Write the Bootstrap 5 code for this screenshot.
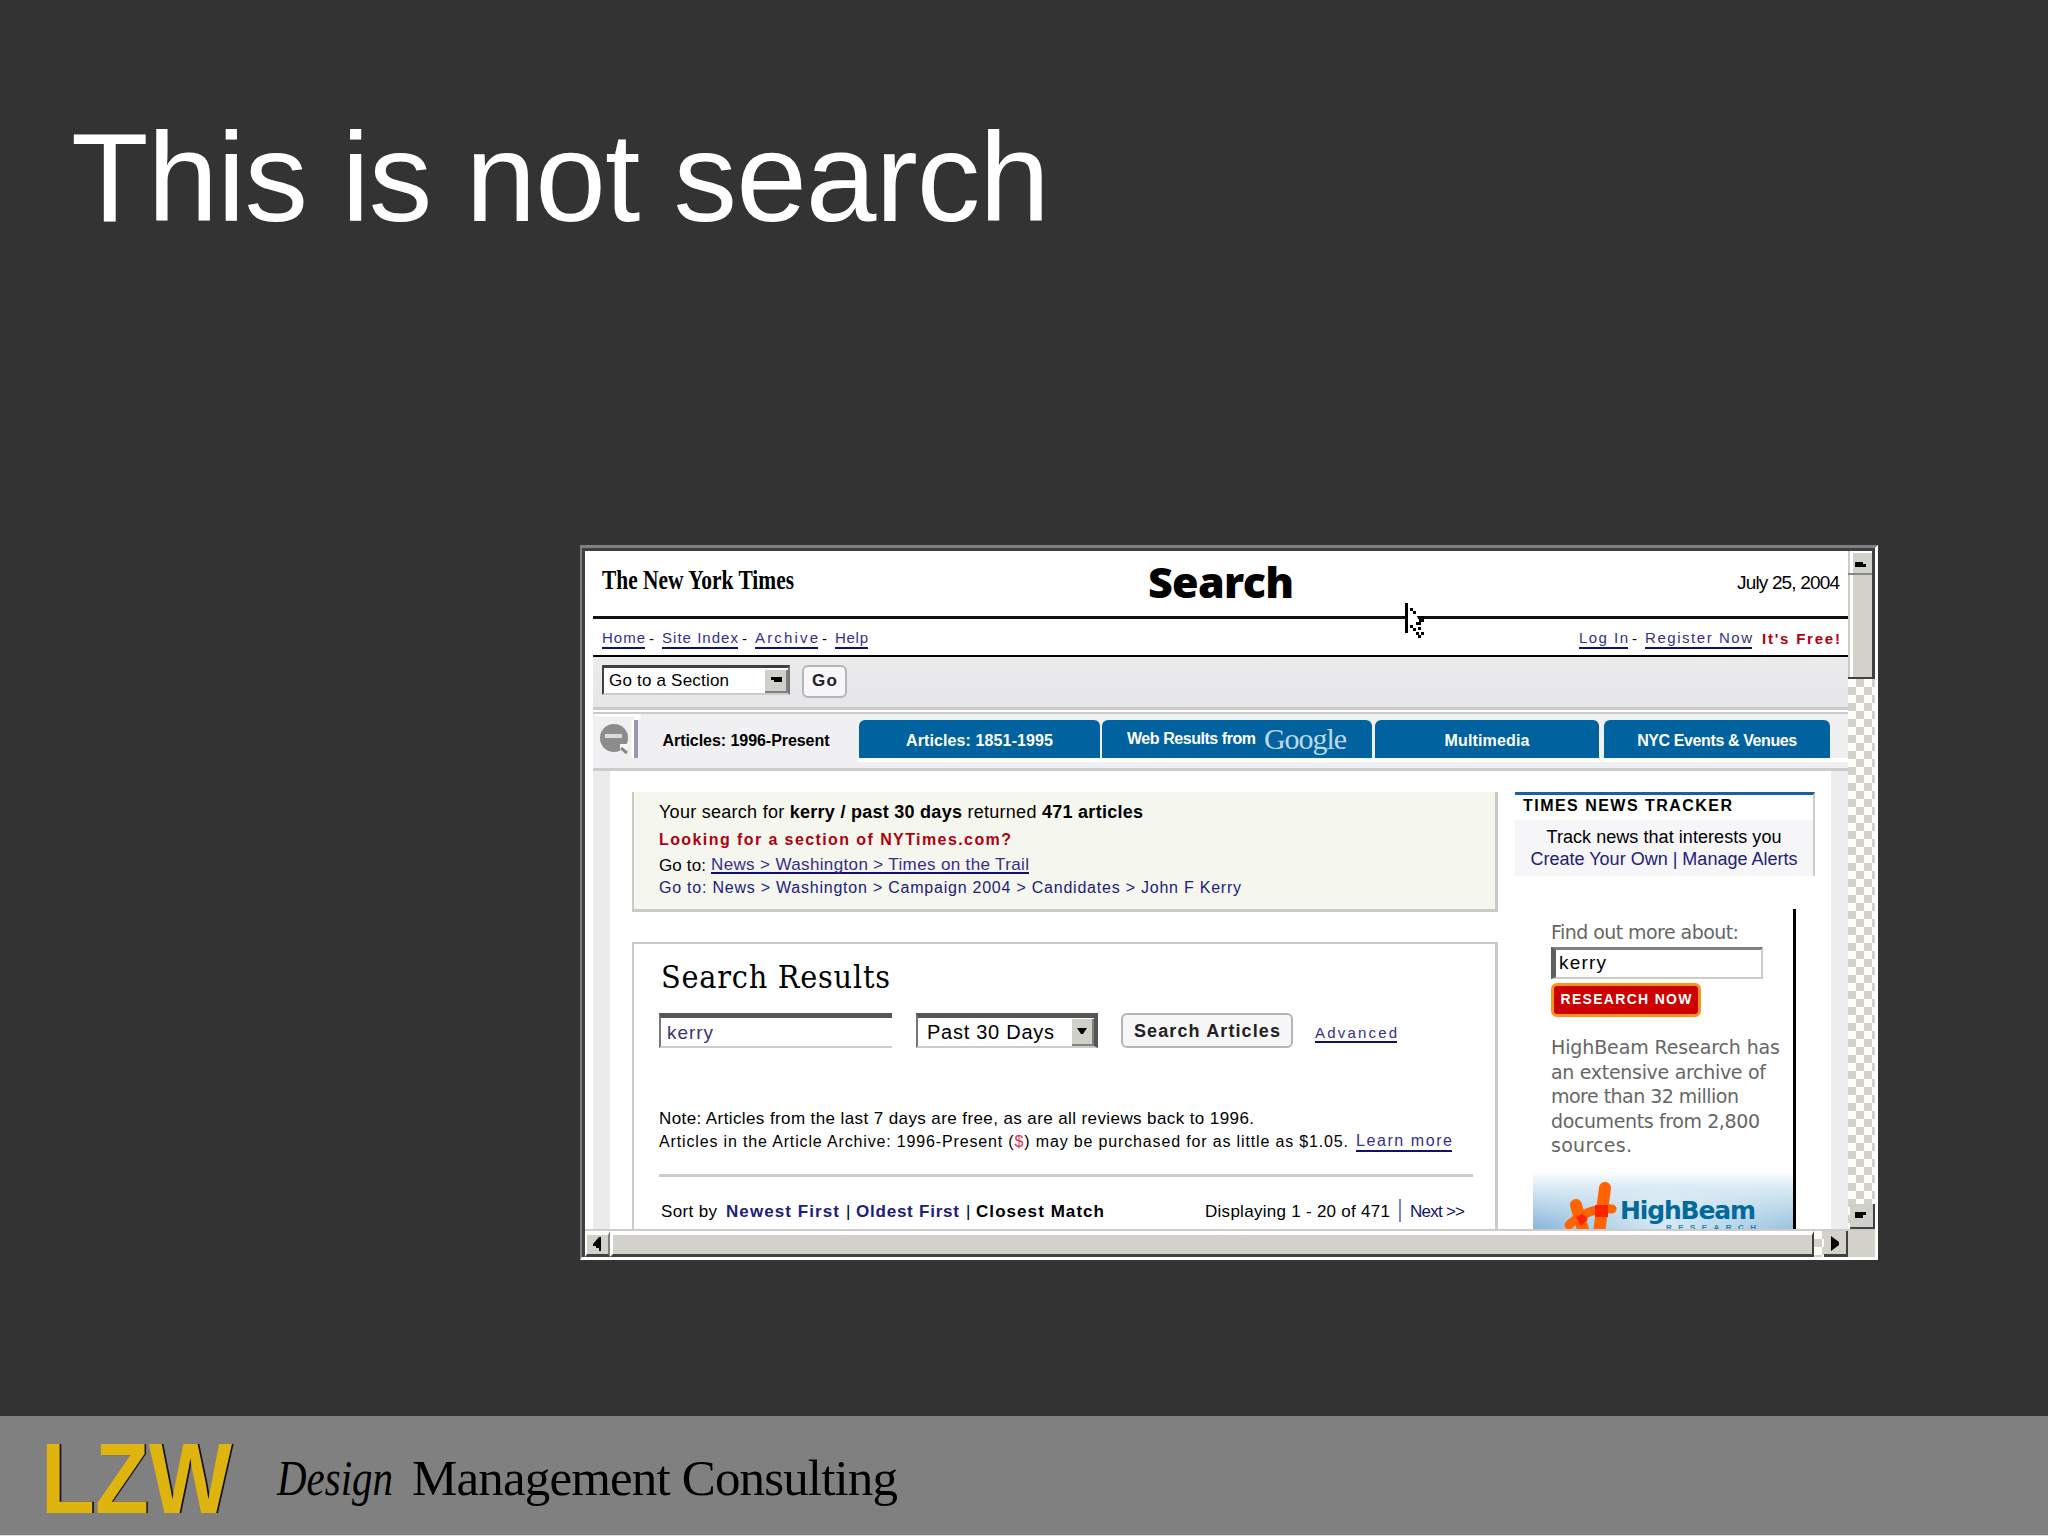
<!DOCTYPE html>
<html lang="en">
<head>
<meta charset="utf-8">
<title>This is not search</title>
<link href="https://cdn.jsdelivr.net/npm/bootstrap@5.3.0/dist/css/bootstrap.min.css" rel="stylesheet">
<style>
body{width:2048px;height:1536px;background:#333;color:#000;overflow:hidden;font-family:"Liberation Sans",Arial,sans-serif}
.slide-title{font-size:127px;line-height:125px;color:#fff;font-weight:400;padding:115px 0 0 71px;margin:0;white-space:nowrap}
.strip{height:120px;background:#808080;border-bottom:1px solid #ddd}
.brand{font-size:101px;line-height:100px;font-weight:700;color:#dfb40f;text-shadow:2px 0 0 #111;margin:12px 0 0 41px}
.tagline{font-family:"Liberation Serif",serif;font-size:51px;line-height:60px;margin-top:32px}
[data-w]{display:inline-block;white-space:nowrap;flex:none}
[data-fit]{transform-origin:0 0}
/* window frame */
.win{width:1298px;height:715px;margin:305px 0 0 580px;border:solid;border-width:3px 3px 3px 2px;border-color:#808080 #fff #fff #808080}
.win-in{height:709px;border:solid #404040;border-width:3px 0 0 3px;background:#fff}
.view{width:1263px;height:678px;padding-left:8px;background:#fff}
.t{font-size:15px;line-height:20px}
.t a,a.t{color:#101070;text-decoration:none}
.lk{border-bottom:2px solid #101070;line-height:18px!important;height:20px;color:#33308a!important}
.head{height:68px;border-bottom:3px solid #111;padding:0 8px 0 9px}
.logo{font:700 27px/20px "Liberation Serif",serif;margin-top:19px}
.h-search{font:900 43px/40px "Noto Sans",sans-serif;margin:11px 0 0 354px}
.date{font-size:19px;margin-top:22px}
.nav1{height:38px;border-bottom:2px solid #000;padding:10px 8px 0 9px}
.bar1{height:53px;background:linear-gradient(#ebebec,#e6e5e8);border-bottom:3px solid #cbcacb;padding:8px 0 0 9px}
.sel{border:solid;border-width:3px 2px 2px 2px;border-color:#404040 #777 #ccc #404040;background:#fff}
.arr{background:#d0d0ca;border:solid;border-width:0 2px 2px 0;border-color:#808080}
.rb{background:#f7f6f8;border:2px solid #b5b4b6;border-radius:6px;color:#222;font-weight:700}
.tabs{height:59px;margin-top:2px;background:#f0eff1;border-top:2px solid #cbcacc;border-bottom:3px solid #cccbcd}
.tabline{height:44px}
.tab{height:38px;margin-top:6px;background:#00629e;color:#fff;font-weight:700;border-radius:6px 6px 0 0;padding-top:9px}
.tabt{font-size:16px;line-height:20px;font-weight:700}
.goog{font:30px/30px "Liberation Serif",serif;color:#bcd9ea;margin:-5px 0 0 8px}
.body1{height:459px;border:solid #edecef;border-width:0 17px;border-left-color:#ebebec;padding:21px 0 0 22px;overflow:hidden}
.main{width:866px}
.box1{height:120px;background:#f5f6ee;border:solid #c9cac6;border-width:0 3px 3px 2px;padding:10px 0 0 25px}
.box2{height:300px;margin-top:30px;border:solid #cbcacb;border-width:2px 3px 0 2px;padding-left:25px}
.inp{border:solid;border-width:5px 0 2px 2px;border-color:#555 #ccc #ccc #777;height:35px}
.hline{width:814px;height:3px;background:#cccbcd}
.side{width:300px;margin-left:17px}
.track{height:84px;border-top:3px solid #1b5f9e;border-right:2px solid #ccc}
.track-b{background:#f6f5f7;height:56px;padding-top:7px}
.hb{margin:33px 0 0 18px;width:263px;height:321px;border-right:3px solid #000}
.vd{font-family:"DejaVu Sans",sans-serif;font-size:19px;line-height:24.5px;color:#666}
.rn{width:150px;height:34px;margin-top:4px;background:#c00;border:3px solid #f7941d;border-radius:6px;color:#fff}
.beam{width:260px;height:61px;background:linear-gradient(#fff,#dcebf5 25%,rgba(220,235,245,0)),linear-gradient(90deg,#7fb2d6,#d5e8f4 50%,#94c0de);margin-top:13px}
.checker{background:repeating-conic-gradient(#d2d1cb 0 25%,#fffefb 0 50%) 0 0/16px 16px}
.vs{width:27px}
.red{color:#b00010}
.nv{color:#20207a}
.cursor{position:absolute;left:1403px;top:600px}
#free{margin-left:10px}
#sec{width:188px;height:30px;padding:3px 0 0 5px;line-height:20px;font-size:17px}
#sec .arr{margin-top:-1px}#sec .arr svg,#p1 .arr svg{display:block}
#go{width:45px;height:33px;margin-left:12px;padding:4px 0 0 8px;font-size:17px}
#t0{width:214px;padding-top:15px}#t0 span{margin-left:-6px}
#t1{width:241px;margin-left:3px}#t2{width:270px;margin-left:2px}#t3{width:224px;margin-left:3px}#t4{width:226px;margin-left:5px}
#t0,#t1,#t2,#t3,#t4{flex:none}
#under{height:4px;margin-left:265px}
#l1{height:28px;font-size:18px}#l1 span,#sr span{vertical-align:top}
#l2{height:26px;font-size:16px}#l2 b{vertical-align:top}
#l3{height:22px;font-size:17px}#l3 a{margin-left:5px;height:18px}#l4{font-size:16px}
#sr{height:69px;padding:18px 0 0 2px}#sr span{font-family:"DejaVu Serif",serif;font-stretch:condensed;font-size:32px;line-height:30px}
#form{height:35px}#form>*{flex:none}
#k1{width:233px;padding:5px 0 0 6px;font-size:19px;color:#403070}
#p1{width:182px;margin-left:24px;padding:4px 0 0 9px;font-size:20px;border-right:4px solid #555}
#p1 .arr{margin-top:-3px}
#sa{width:172px;margin-left:23px;padding-top:6px;font-size:18px}
#adv{margin:11px 0 0 22px;font-size:15px;height:19px}
#n1{margin-top:61px;height:23px;font-size:17px}#n2{height:42px;font-size:16px}#n2 a{margin-left:8px}
#so{margin-top:25px;width:806px;font-size:17px;padding-left:2px}
#so [data-w="113"]{margin-left:9px}#so [data-w="3"]{margin:0 7px}
#vb{width:2px;height:23px;margin:-3px 9px 0;background:#8080d0}
#tt{height:25px;padding:1px 0 0 8px}#tt b{font-size:16px;vertical-align:top}
.track-b span{font-size:18px;vertical-align:top}.track-b div{height:22px}
#hbc{padding:6px 0 0 18px}#fo{height:32px;padding-top:5px}#fo span{vertical-align:top}
#k2{width:212px;height:32px;border:solid;border-width:3px 2px 2px 5px;border-color:#808080 #ccc #ccc #606060;font-size:19px;padding:3px 0 0 3px}
.rn b{font-size:14px;line-height:26px;vertical-align:top}
#para{margin-top:18px;height:123px}#para span{vertical-align:top}
#hbt{font:700 25px/26px "DejaVu Sans",sans-serif;color:#006a9c;margin-top:27px}
#hbr{font-size:8px;line-height:8px;color:#2a80b0;margin:0 0 0 46px}
#thumb{width:27px;height:128px;background:#d2d1ca;border:solid #404040;border-width:0 3px 2px 0}
#down{width:25px;height:25px;margin-left:2px;background:#d0d0ca;border:solid #404040;border-width:0 2px 2px 0}
#thumb svg,#down svg,#hs svg{display:block}
#hs{height:28px;background:#d2d1ca;border-top:2px solid #ccc}
#hl{width:25px;height:26px;border:solid;border-width:4px 2px 3px 2px;border-color:#fff #808080 #404040 #fff}
#ht{width:1204px;border:solid;border-width:4px 2px 3px 3px;border-color:#fff #404040 #404040 #fff}
#hg{width:10px}
#hr{width:24px;border:solid #404040;border-width:0 2px 3px 0;margin-right:27px}
#tg1{margin-left:45px}#tg2{margin-left:19px}
</style>
</head>
<body class="d-flex flex-column">
<h1 class="slide-title"><span data-w="979">This is not search</span></h1>
<div class="win d-block"><div class="win-in d-flex flex-column">
 <div class="d-flex">
  <div class="view overflow-hidden">
   <div class="head d-flex align-items-start">
     <span class="logo" data-w="192" data-fit="x">The New York Times</span>
     <span class="h-search" data-w="146">Search</span>
     <span class="date t ms-auto" data-w="103">July 25, 2004</span>
   </div>
   <div class="nav1 d-flex t">
     <a class="lk" data-w="43">Home</a><span class="ms-1 me-2" data-w="5">-</span>
     <a class="lk" data-w="76">Site Index</a><span class="ms-1 me-2" data-w="5">-</span>
     <a class="lk" data-w="63">Archive</a><span class="ms-1 me-2" data-w="5">-</span>
     <a class="lk" data-w="33">Help</a>
     <a class="lk ms-auto" data-w="49">Log In</a><span class="ms-1 me-2" data-w="5">-</span>
     <a class="lk" data-w="107">Register Now</a>
     <b class="red" id="free" data-w="78">It's Free!</b>
   </div>
   <div class="bar1 d-flex align-items-start">
     <div class="sel d-flex t justify-content-between" id="sec"><span data-w="120">Go to a Section</span>
       <span class="arr"><svg width="21" height="22"><path d="M6 7h11v5h-8v-2h-3z"/></svg></span></div>
     <div class="rb t" id="go"><span data-w="25">Go</span></div>
   </div>
   <div class="tabs">
    <div class="tabline d-flex align-items-start">
     <svg width="49" height="44"><circle cx="21" cy="24" r="14" fill="#8c8c8c"/><path d="M12 22h17" stroke="#ddd" stroke-width="4"/><path d="M27 30h7v8h-7z" fill="#f8f8f8"/><path d="M28 34l6 5" stroke="#888" stroke-width="3"/><path d="M1 1h45v3h-3v40M40 6v38" fill="none" stroke="#fff" stroke-width="3"/><path d="M43 6v38" stroke="#9b97b3" stroke-width="4"/></svg>
     <div class="text-center" id="t0"><span class="tabt" data-w="167">Articles: 1996-Present</span></div>
     <div class="tab text-center" id="t1"><span class="tabt" data-w="147">Articles: 1851-1995</span></div>
     <div class="tab d-flex justify-content-center" id="t2"><span class="tabt" data-w="129">Web Results from</span><span class="goog" data-w="83">Google</span></div>
     <div class="tab text-center" id="t3"><span class="tabt" data-w="85">Multimedia</span></div>
     <div class="tab text-center" id="t4"><span class="tabt" data-w="160">NYC Events &amp; Venues</span></div>
    </div>
    <div class="bg-white" id="under"></div>
   </div>
   <div class="body1 d-flex">
    <div class="main flex-shrink-0">
     <div class="box1 t">
      <div id="l1"><span data-w="484">Your search for <b>kerry / past 30 days</b> returned <b>471 articles</b></span></div>
      <div id="l2"><b class="red" data-w="352">Looking for a section of NYTimes.com?</b></div>
      <div id="l3" class="d-flex"><span data-w="47">Go to:</span><a class="lk" data-w="318">News &gt; Washington &gt; Times on the Trail</a></div>
      <div id="l4" class="nv"><span data-w="582">Go to: News &gt; Washington &gt; Campaign 2004 &gt; Candidates &gt; John F Kerry</span></div>
     </div>
     <div class="box2 t">
      <div id="sr"><span data-w="229">Search Results</span></div>
      <div class="d-flex" id="form">
        <div class="inp" id="k1"><span data-w="46">kerry</span></div>
        <div class="inp d-flex justify-content-between" id="p1"><span data-w="127">Past 30 Days</span><span class="arr"><svg width="20" height="23"><path d="M5 9h10l-4 6h-2z"/></svg></span></div>
        <div class="rb text-center" id="sa"><span data-w="146">Search Articles</span></div>
        <a class="lk" id="adv" data-w="82">Advanced</a>
      </div>
      <div id="n1"><span data-w="595">Note: Articles from the last 7 days are free, as are all reviews back to 1996.</span></div>
      <div id="n2" class="d-flex"><span data-w="689">Articles in the Article Archive: 1996-Present (<span class="text-danger">$</span>) may be purchased for as little as $1.05.</span><a class="lk" data-w="96">Learn more</a></div>
      <div class="hline"></div>
      <div id="so" class="d-flex">
        <span data-w="56">Sort by</span><b class="nv" data-w="113">Newest First</b><span data-w="3">|</span><b class="nv" data-w="103">Oldest First</b><span data-w="3">|</span><b data-w="128">Closest Match</b>
        <span class="ms-auto" data-w="185">Displaying 1 - 20 of 471</span><span id="vb"></span><a class="nv" data-w="55">Next &gt;&gt;</a>
      </div>
     </div>
    </div>
    <div class="side flex-shrink-0">
     <div class="track t"><div id="tt"><b data-w="209">TIMES NEWS TRACKER</b></div>
      <div class="track-b text-center"><div><span data-w="235">Track news that interests you</span></div><div><span class="nv" data-w="267">Create Your Own | Manage Alerts</span></div></div></div>
     <div class="hb">
      <div id="hbc">
       <div class="vd" id="fo"><span data-w="188">Find out more about:</span></div>
       <div id="k2" class="t"><span data-w="47">kerry</span></div>
       <div class="rn text-center"><b data-w="131">RESEARCH NOW</b></div>
       <div class="vd" id="para"><span data-w="229">HighBeam Research has</span><br><span data-w="215">an extensive archive of</span><br><span data-w="188">more than 32 million</span><br><span data-w="209">documents from 2,800</span><br><span data-w="81">sources.</span></div>
      </div>
      <div class="beam d-flex overflow-hidden">
       <svg width="87" height="61" class="flex-shrink-0"><g stroke-linecap="round" fill="none" stroke="#ff6400"><path d="M43 34l8 28M72 17l-6 45" stroke-width="12"/><path d="M36 54q20-18 43-16" stroke-width="9"/></g><path d="M43 46l6-3 6 5-7 7zM62 34h13v12h-13z" fill="#f20"/></svg>
       <div class="d-flex flex-column"><b id="hbt" data-w="136">HighBeam</b><b id="hbr" data-w="90">RESEARCH</b></div>
      </div>
     </div>
    </div>
   </div>
  </div>
  <div class="vs checker d-flex flex-column">
   <div id="thumb"><svg width="24" height="126"><path d="M0 0h2v126h-2z" fill="#ccc"/><path d="M2 0h22v2h-19v124h-3z" fill="#fff"/><path d="M0 22h24v2h-24z" fill="#888"/><path d="M7 11h8v2h3v3h-11z"/></svg></div>
   <div class="mt-auto" id="down"><svg width="22" height="22"><path d="M5 8h11v3h-3v3h-8z"/></svg></div>
  </div>
 </div>
 <div class="d-flex" id="hs">
   <div id="hl"><svg width="21" height="19"><path d="M6 9l6-7h2v14h-2v-3h-3v-2h-3z"/></svg></div>
   <div id="ht"></div><div class="checker" id="hg"></div>
   <div id="hr"><svg width="20" height="22"><path d="M7 5l8 6v3l-8 6z"/></svg></div>
 </div>
</div></div>
<div class="strip d-flex mt-auto flex-shrink-0">
 <span class="brand" data-w="191" data-fit="x">LZW</span>
 <span class="tagline" id="tg1" data-w="116" data-fit="x"><i>Design</i></span><span class="tagline" id="tg2" data-w="486">Management Consulting</span>
</div>
<svg class="cursor" width="26" height="44"><path d="M4 3v28h5l8 6 4-3V14l-6 4z" fill="#fff"/><path d="M2 3h3v30h-3zM7 8h3v3h-3zM10 11h3v3h-3zM15 16h6v6h-3v3h-5v-3h3v-3h-1zM7 25h3v3h3v3h-3v-3h-3zM15 27h3v3h-3zM13 32h3v3h-3zM18 32h3v3h-3zM15 35h3v3h-3z"/></svg>
<script>
/* Spread, tighten or scale each label so that it fills its column. */
document.querySelectorAll('[data-w]').forEach(function(e){
  var w=+e.dataset.w, n=Math.max(e.textContent.length-1,1), r=document.createRange();
  r.selectNodeContents(e);
  var nat=r.getBoundingClientRect().width;
  if(e.dataset.fit) e.style.transform='scaleX('+(w/nat).toFixed(4)+')';
  else if(e.textContent.length>1) e.style.letterSpacing=((w-nat)/n).toFixed(3)+'px';
  e.style.width=w+'px';
});
</script>
<script src="https://cdn.jsdelivr.net/npm/bootstrap@5.3.0/dist/js/bootstrap.bundle.min.js"></script>
</body>
</html>
